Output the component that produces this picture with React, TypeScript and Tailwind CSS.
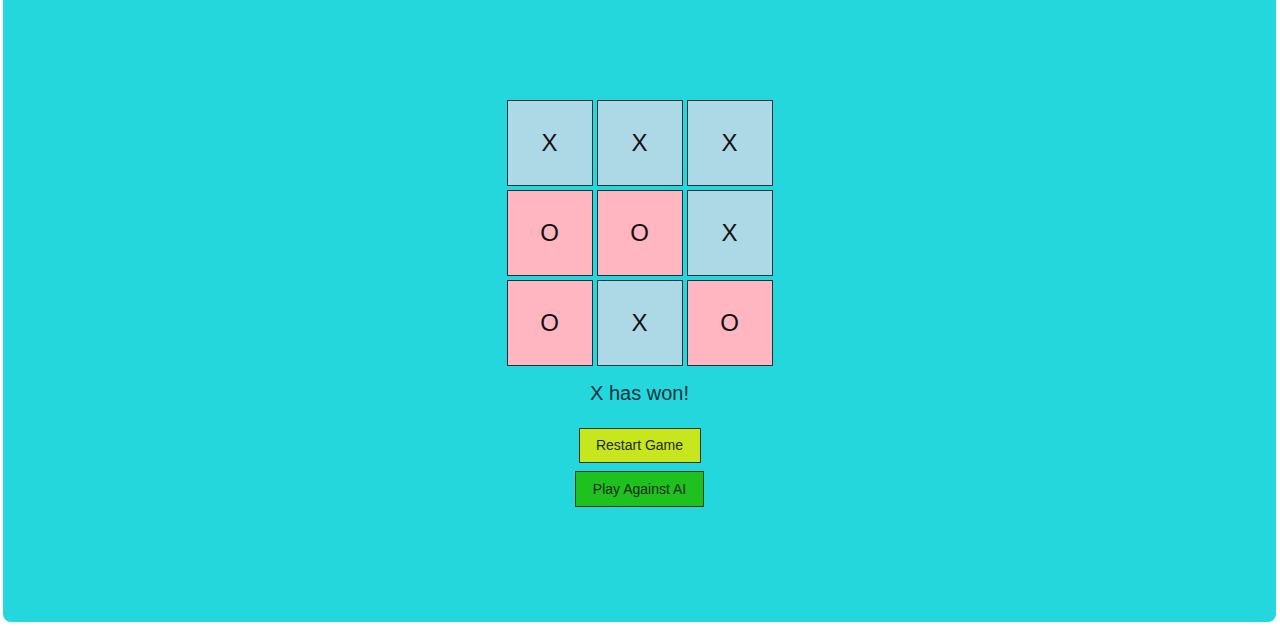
import React from "react";

const board = ["X", "X", "X", "O", "O", "X", "O", "X", "O"];

export default function App() {
  return (
    <div className="w-[1280px] h-[626px] bg-white pl-[3px] pr-[4px] pb-[4px]" style={{ fontFamily: '"Liberation Sans", Arial, sans-serif' }}>
      <div className="h-full bg-[#23d7dd] rounded-b-[8px] flex flex-col items-center pt-[100px]">
        <div className="grid grid-cols-[86px_86px_86px] grid-rows-[86px_86px_86px] gap-[4px]">
          {board.map((v, i) => (
            <div
              key={i}
              className={`border border-[#1b3338] flex items-center justify-center text-[24px] text-[#111] ${v === "X" ? "bg-[#add8e6]" : "bg-[#ffb6c1]"}`}
            >
              {v}
            </div>
          ))}
        </div>
        <div className="mt-[16px] text-[20px] leading-[23px] text-[#14323a]">X has won!</div>
        <button className="mt-[23px] h-[35px] w-[122px] border border-[#2c3a2a] bg-[#c8e61e] text-[14px] text-[#1f2a10]">
          Restart Game
        </button>
        <button className="mt-[8px] h-[36px] w-[129px] border border-[#1c3a1c] bg-[#1fc11f] text-[14px] text-[#0f2a0f]">
          Play Against AI
        </button>
      </div>
    </div>
  );
}
